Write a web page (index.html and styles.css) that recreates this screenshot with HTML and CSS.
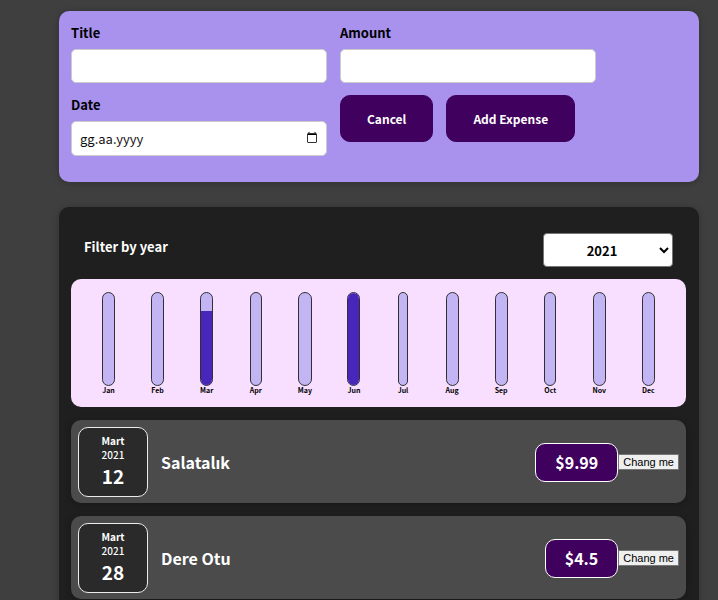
FILE: index.html
```html
<!DOCTYPE html>
<html lang="en">
<head>
<meta charset="utf-8">
<meta name="viewport" content="width=device-width, initial-scale=1">
<title>Expenses</title>
<link rel="stylesheet" href="styles.css">
</head>
<body>
<main class="page">
  <form class="card new-expense">
    <div class="field">
      <label for="title">Title</label>
      <input id="title" type="text">
    </div>
    <div class="field">
      <label for="amount">Amount</label>
      <input id="amount" type="text" inputmode="decimal">
    </div>
    <div class="field">
      <label for="date">Date</label>
      <div class="date-control">
        <input id="date" type="text" placeholder="gg.aa.yyyy">
        <svg class="calendar" viewBox="0 0 10 11" aria-hidden="true"><path d="M1 1h8v2H1z" fill="#000"/><path d="M2 0v2M8 0v2" stroke="#000"/><rect x=".5" y="1.5" width="9" height="9" rx=".5" fill="none" stroke="#333"/></svg>
      </div>
    </div>
    <div class="actions">
      <button class="action" type="button">Cancel</button>
      <button class="action" type="submit">Add Expense</button>
    </div>
  </form>

  <section class="card expenses">
    <div class="filter">
      <label for="year">Filter by year</label>
      <select id="year">
        <option>2022</option>
        <option selected>2021</option>
        <option>2020</option>
        <option>2019</option>
      </select>
    </div>

    <div class="chart">
      <div class="month"><div class="bar"></div><span>Jan</span></div>
      <div class="month"><div class="bar"></div><span>Feb</span></div>
      <div class="month"><div class="bar"><div class="fill" style="height: 80%"></div></div><span>Mar</span></div>
      <div class="month"><div class="bar"></div><span>Apr</span></div>
      <div class="month"><div class="bar"></div><span>May</span></div>
      <div class="month"><div class="bar"><div class="fill" style="height: 100%"></div></div><span>Jun</span></div>
      <div class="month"><div class="bar"></div><span>Jul</span></div>
      <div class="month"><div class="bar"></div><span>Aug</span></div>
      <div class="month"><div class="bar"></div><span>Sep</span></div>
      <div class="month"><div class="bar"></div><span>Oct</span></div>
      <div class="month"><div class="bar"></div><span>Nov</span></div>
      <div class="month"><div class="bar"></div><span>Dec</span></div>
    </div>

    <ul class="list">
      <li class="item">
        <div class="date"><span class="date-month">Mart</span><span class="date-year">2021</span><span class="date-day">12</span></div>
        <h2>Salatalık</h2>
        <div class="price">$9.99</div>
        <button class="change" type="button">Chang me</button>
      </li>
      <li class="item">
        <div class="date"><span class="date-month">Mart</span><span class="date-year">2021</span><span class="date-day">28</span></div>
        <h2>Dere Otu</h2>
        <div class="price">$4.5</div>
        <button class="change" type="button">Chang me</button>
      </li>
    </ul>
  </section>
</main>
</body>
</html>
```
FILE: styles.css
```css
* {
  box-sizing: border-box;
}

body {
  margin: 0;
  background: #3f3f3f;
}

body,
input,
select,
.action {
  font-family: "Noto Sans CJK JP", "Noto Sans", sans-serif;
}

.page {
  max-width: 718px;
  margin: 0 auto;
  padding: 11px 19px 0 59px;
}

.card {
  border-radius: 10px;
  box-shadow: 0 1px 6px rgba(0, 0, 0, 0.25);
}

.new-expense {
  display: grid;
  grid-template-columns: repeat(2, minmax(0, 256px));
  gap: 12px 13px;
  padding: 12px 12px 26px;
  margin-bottom: 25px;
  background: #a892ee;
}

.field label {
  display: block;
  margin-bottom: 6px;
  font-size: 13px;
  line-height: 20px;
  font-weight: 700;
}

.field input {
  display: block;
  width: 100%;
  height: 34px;
  padding: 5px 8px;
  border: 1px solid #ccc;
  border-radius: 5px;
  background: #fff;
  font-size: 13px;
}

.field .date-control input {
  height: 35px;
}

.field input::placeholder {
  color: #111;
}

.date-control {
  position: relative;
}

.calendar {
  position: absolute;
  top: 11px;
  right: 10px;
  width: 10px;
  height: 11px;
}

.actions {
  display: flex;
  align-items: flex-start;
  gap: 13px;
}

.action {
  height: 47px;
  padding: 0 26px;
  border: 1px solid #40005d;
  border-radius: 10px;
  background: #40005d;
  color: #fff;
  font-size: 12px;
  font-weight: 700;
  white-space: nowrap;
}

.expenses {
  padding: 13px 13px 13px 12px;
  background: #1f1f1f;
}

.filter {
  display: flex;
  align-items: flex-start;
  justify-content: space-between;
  padding: 13px 13px 12px;
  color: #fff;
  font-size: 13px;
  line-height: 28px;
  font-weight: 700;
}

.filter select {
  width: 130px;
  height: 34px;
  border: 1px solid #767676;
  border-radius: 4px;
  background: #fff;
  color: #000;
  font-size: 13px;
  font-weight: 700;
  text-align: center;
}

.chart {
  display: flex;
  height: 128px;
  padding: 13px;
  border-radius: 10px;
  background: #f8dfff;
}

.month {
  display: grid;
  flex: 1;
  grid-template-columns: auto;
  align-content: start;
  justify-content: center;
  font-size: 7px;
  line-height: 8px;
  font-weight: 700;
}

.bar {
  display: flex;
  flex-direction: column;
  justify-content: flex-end;
  height: 94px;
  overflow: hidden;
  border: 1px solid #313131;
  border-radius: 10px;
  background: #c3b4f3;
}

.fill {
  background: #4826b9;
}

.list {
  margin: 0;
  padding: 0;
  list-style: none;
}

.item {
  display: flex;
  align-items: center;
  margin-top: 13px;
  padding: 7px 7px 6px;
  border-radius: 10px;
  background: #4b4b4b;
  box-shadow: 0 1px 6px rgba(0, 0, 0, 0.25);
  color: #fff;
}

.date {
  display: flex;
  flex-direction: column;
  align-items: center;
  justify-content: center;
  width: 70px;
  height: 70px;
  border: 1px solid #ececec;
  border-radius: 10px;
  background: #2a2a2a;
  font-weight: 700;
}

.date-month,
.date-year {
  font-size: 10px;
  line-height: 14px;
}

.date-year {
  font-weight: 500;
}

.date-day {
  font-size: 19px;
  line-height: 28px;
}

.item h2 {
  flex: 1;
  margin: 0 13px;
  font-size: 16px;
  font-weight: 700;
}

.price {
  padding: 6px 19px;
  border: 1px solid #fff;
  border-radius: 10px;
  background: #40005d;
  font-size: 16px;
  line-height: 25px;
  font-weight: 700;
}

.change {
  height: 16px;
  padding: 0 4px;
  border: 1px solid #767676;
  border-radius: 0;
  background: #efefef;
  color: #000;
  font-family: "Liberation Sans", Arial, sans-serif;
  font-size: 11px;
  line-height: 14px;
}
```
